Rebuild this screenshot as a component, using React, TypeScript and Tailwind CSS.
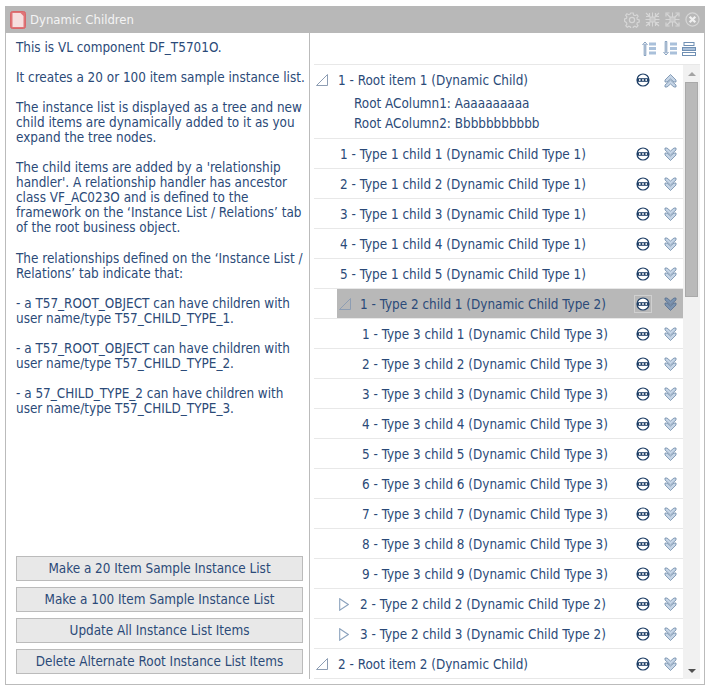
import React from "react";

const textColor = "text-[#2b4a78]";

function Dots({ selected }: { selected?: boolean }) {
  return (
    <span className={"flex h-[16px] w-[16px] items-center justify-center " + (selected ? "outline outline-1 outline-[#d0d0d0]" : "")}>
      <svg width="14" height="14" viewBox="0 0 14 14">
        <circle cx="7" cy="7" r="6" fill="#fff" stroke="#1f3f66" strokeWidth="1.2" />
        <rect x="1" y="5.2" width="12" height="3.6" fill="#1f3f66" />
        <circle cx="3.8" cy="7" r="0.9" fill="#fff" />
        <circle cx="7" cy="7" r="0.9" fill="#fff" />
        <circle cx="10.2" cy="7" r="0.9" fill="#fff" />
      </svg>
    </span>
  );
}

function Chevrons({ up, dark }: { up?: boolean; dark?: boolean }) {
  const fill = dark ? "#7d94b0" : "#c6d5e6";
  const stroke = dark ? "#566f8f" : "#6f8aa8";
  return (
    <svg width="13" height="15" viewBox="0 0 13 15" className={up ? "rotate-180" : ""}>
      <path d="M1 1 L3 1 L6.5 4 L10 1 L12 1 L12 3 L6.5 8 L1 3 Z" fill={fill} stroke={stroke} strokeWidth="0.8" />
      <path d="M1 6 L3 6 L6.5 9 L10 6 L12 6 L12 8 L6.5 13.5 L1 8 Z" fill={fill} stroke={stroke} strokeWidth="0.8" />
    </svg>
  );
}

function Expanded() {
  return (
    <svg width="12" height="12" viewBox="0 0 12 12">
      <path d="M0.5 11.5 L11.5 0.5 V11.5 Z" fill="none" stroke="#8d9db3" strokeWidth="1" />
    </svg>
  );
}

function Collapsed() {
  return (
    <svg width="10" height="13" viewBox="0 0 10 13">
      <path d="M0.7 0.8 L9.3 6.5 L0.7 12.2 Z" fill="none" stroke="#8ba2bd" strokeWidth="1.1" />
    </svg>
  );
}

function Actions({ selected, up }: { selected?: boolean; up?: boolean }) {
  return (
    <>
      <span className="flex w-[16px] justify-center"><Dots selected={selected} /></span>
      <span className="ml-[13px] mr-[6px] flex w-[13px] justify-center"><Chevrons dark={selected} up={up} /></span>
    </>
  );
}

function Row({
  label,
  pad,
  icon,
  selected,
  offset,
}: {
  label: string;
  pad: string;
  icon?: React.ReactNode;
  selected?: boolean;
  offset?: string;
}) {
  return (
    <div className="flex h-[30px] flex-none border-b border-[#e8e8e8]">
      <div className={offset ?? "w-0"} />
      <div className={"flex min-w-0 flex-1 items-center pt-[1px] " + pad + (selected ? " bg-[#b8b8b8]" : "")}>
        {icon}
        <span className="flex-1 whitespace-nowrap pt-[2px]">{label}</span>
        <Actions selected={selected} />
      </div>
    </div>
  );
}

function WinIcon({ kind }: { kind: "gear" | "in" | "out" | "close" }) {
  const c = "#d6d6d6";
  if (kind === "gear")
    return (
      <svg width="16" height="16" viewBox="0 0 16 16" fill="none" stroke={c} strokeWidth="1.2">
        <circle cx="8" cy="8" r="2.6" />
        <path d="M6.8 1h2.4l.4 2 1.5.7 1.8-1 1.2 1.6-1.2 1.6.4 1.4 1.9.6v2.2l-1.9.6-.4 1.4 1.1 1.6-1.4 1.5-1.7-1-1.5.7-.4 1.9H6.8l-.4-1.9-1.5-.7-1.7 1-1.4-1.5 1.1-1.6-.4-1.4L.6 9.1V6.9l1.9-.6.4-1.4-1.2-1.6 1.2-1.6 1.8 1 1.5-.7z" />
      </svg>
    );
  if (kind === "close")
    return (
      <svg width="15" height="15" viewBox="0 0 16 16" fill="none">
        <circle cx="8" cy="8" r="7" stroke={c} strokeWidth="1.3" />
        <path d="M5 5l6 6M11 5l-6 6" stroke="#f0f0f0" strokeWidth="2.4" />
      </svg>
    );
  return (
    <svg width="15" height="15" viewBox="0 0 15 15" fill="none" stroke={c}>
      <rect x="5" y="5" width="5" height="5" fill="#c8c8c8" strokeWidth="1" />
      <path d="M7.5 0.5V5M7.5 10v4.5M0.5 7.5H5M10 7.5h4.5" strokeWidth="1" />
      {kind === "in" ? (
        <path d="M1 1l3.5 3.5M14 1l-3.5 3.5M1 14l3.5-3.5M14 14l-3.5-3.5M1 4.5h3.5V1M14 4.5h-3.5V1M1 10.5h3.5V14M14 10.5h-3.5V14" strokeWidth="1.2" />
      ) : (
        <path d="M2 2l3 3M13 2l-3 3M2 13l3-3M13 13l-3-3M1 4.5V1h3.5M14 4.5V1h-3.5M1 10.5V14h3.5M14 10.5V14h-3.5" strokeWidth="1.2" />
      )}
    </svg>
  );
}

function ToolIcon({ kind }: { kind: "up" | "down" | "list" }) {
  if (kind === "list")
    return (
      <svg width="14" height="14" viewBox="0 0 14 14" fill="none">
        <rect x="2" y="0.5" width="10" height="3" fill="#fff" stroke="#6f8fb3" />
        <rect x="0.5" y="5.5" width="13" height="3" fill="#a9c0da" stroke="#6f8fb3" />
        <rect x="0.5" y="10.5" width="13" height="3" fill="#fff" stroke="#6f8fb3" />
      </svg>
    );
  return (
    <svg width="14" height="15" viewBox="0 0 14 15" fill="none" className={kind === "down" ? "scale-y-[-1]" : ""}>
      <path d="M0.5 4 L3 1 L5.5 4 M2.2 3 V14.5 M3.8 3 V14.5 M2.2 14.5 H3.8" stroke="#6f8fb3" strokeWidth="0.9" />
      <path d="M7 1.5h7v3H7zM7 6h7v3H7zM7 10.5h7v3H7z" fill="#a9c0da" />
    </svg>
  );
}

const type3 = [1, 2, 3, 4, 5, 6, 7, 8, 9];

export default function App() {
  return (
    <div
      className={"h-[696px] w-[711px] bg-white pl-[5px] pr-[6px] pt-[6px] pb-[11px] text-[13.4px] " + textColor}
      style={{ fontFamily: '"DejaVu Sans Condensed", "DejaVu Sans", sans-serif' }}
    >
      <div className="flex h-full flex-col border border-t-0 border-[#bbbbbb]">
        <div className="-mx-px flex h-[27px] flex-none items-center bg-[#b8b8b8] pl-[5px] pr-[5px]">
          <svg width="16" height="18" viewBox="0 0 16 18" className="mr-[4px]">
            <rect x="0.5" y="0.5" width="15" height="17" rx="2" fill="#e07477" stroke="#d8686b" />
            <path d="M2.5 2h8l3 3v11h-11z" fill="#f6dfdf" />
          </svg>
          <span className="flex-1 text-[13px] font-medium text-[#f4f4f4]">Dynamic Children</span>
          <span className="flex items-center gap-[5px]">
            <WinIcon kind="gear" />
            <WinIcon kind="in" />
            <WinIcon kind="out" />
            <WinIcon kind="close" />
          </span>
        </div>

        <div className="flex min-h-0 flex-1 pb-[5px]">
          <div className="flex w-[304px] flex-none flex-col border-r border-[#bbbbbb] pb-[5px] pl-[10px] pr-[5px] pt-[7px]">
            <div className="leading-[15px]">
              <p>This is VL component DF_T5701O.</p>
              <p className="mt-[15px] whitespace-nowrap">It creates a 20 or 100 item sample instance list.</p>
              <p className="mt-[15px]">The instance list is displayed as a tree and new<br />child items are dynamically added to it as you<br />expand the tree nodes.</p>
              <p className="mt-[15px]">The child items are added by a 'relationship<br />handler'. A relationship handler has ancestor<br />class VF_AC023O and is defined to the<br />framework on the ‘Instance List / Relations’ tab<br />of the root business object.</p>
              <p className="mt-[16px]">The relationships defined on the ‘Instance List /<br />Relations’ tab indicate that:</p>
              <p className="mt-[15px]">- a T57_ROOT_OBJECT can have children with<br />user name/type T57_CHILD_TYPE_1.</p>
              <p className="mt-[15px]">- a T57_ROOT_OBJECT can have children with<br />user name/type T57_CHILD_TYPE_2.</p>
              <p className="mt-[15px]">- a 57_CHILD_TYPE_2 can have children with<br />user name/type T57_CHILD_TYPE_3.</p>
            </div>
            <div className="mt-auto flex flex-col gap-[6px] pr-[1px]">
              {[
                "Make a 20 Item Sample Instance List",
                "Make a 100 Item Sample Instance List",
                "Update All Instance List Items",
                "Delete Alternate Root Instance List Items",
              ].map((t) => (
                <button key={t} className={"h-[25px] border border-[#bbbbbb] bg-[#e8e8e8] pt-[2px] text-[13.4px] " + textColor}>
                  {t}
                </button>
              ))}
            </div>
          </div>

          <div className="flex min-w-0 flex-1 flex-col pl-[4px] pr-[4px]">
            <div className="flex h-[32px] flex-none items-center justify-end border-b border-[#e8e8e8] pr-[4px]">
              <ToolIcon kind="up" />
              <span className="ml-[7px] flex"><ToolIcon kind="down" /></span>
              <span className="ml-[5px] flex"><ToolIcon kind="list" /></span>
            </div>
            <div className="flex min-h-0 flex-1">
              <div className="flex min-w-0 flex-1 flex-col">
                <div className="h-[74px] flex-none border-b border-[#e8e8e8]">
                  <div className="flex h-[28px] items-center pl-[2px] pt-[2px]">
                    <Expanded />
                    <span className="ml-[10px] flex-1 pt-[2px]">1 - Root item 1 (Dynamic Child)</span>
                    <Actions up />
                  </div>
                  <div className="pl-[40px] pt-[1px] leading-[20px]">
                    <div>Root AColumn1: Aaaaaaaaaa</div>
                    <div>Root AColumn2: Bbbbbbbbbbb</div>
                  </div>
                </div>
                {[1, 2, 3, 4, 5].map((n) => (
                  <Row key={n} pad="pl-[26px]" label={`${n} - Type 1 child ${n} (Dynamic Child Type 1)`} />
                ))}
                <Row
                  selected
                  offset="w-[23px]"
                  pad="pl-[2px]"
                  icon={<span className="mr-[9px] flex"><Expanded /></span>}
                  label="1 - Type 2 child 1 (Dynamic Child Type 2)"
                />
                {type3.map((n) => (
                  <Row key={n} pad="pl-[48px]" label={`${n} - Type 3 child ${n} (Dynamic Child Type 3)`} />
                ))}
                {[2, 3].map((n) => (
                  <Row
                    key={n}
                    pad="pl-[25px]"
                    icon={<span className="mr-[11px] flex"><Collapsed /></span>}
                    label={`${n} - Type 2 child ${n} (Dynamic Child Type 2)`}
                  />
                ))}
                <Row
                  pad="pl-[2px]"
                  icon={<span className="mr-[10px] flex"><Expanded /></span>}
                  label="2 - Root item 2 (Dynamic Child)"
                />
              </div>
              <div className="flex w-[17px] flex-none flex-col items-center bg-[#f1f1f1]">
                <div className="flex h-[17px] flex-none items-center justify-center">
                  <div className="h-0 w-0 border-x-[4px] border-b-[4px] border-x-transparent border-b-[#a3a3a3]" />
                </div>
                <div className="h-[215px] w-[13px] flex-none border border-[#a9a9a9] bg-[#b9b9b9]" />
                <div className="mt-auto flex h-[17px] flex-none items-center justify-center">
                  <div className="h-0 w-0 border-x-[4px] border-t-[4px] border-x-transparent border-t-[#505050]" />
                </div>
              </div>
            </div>
          </div>
        </div>
      </div>
    </div>
  );
}
